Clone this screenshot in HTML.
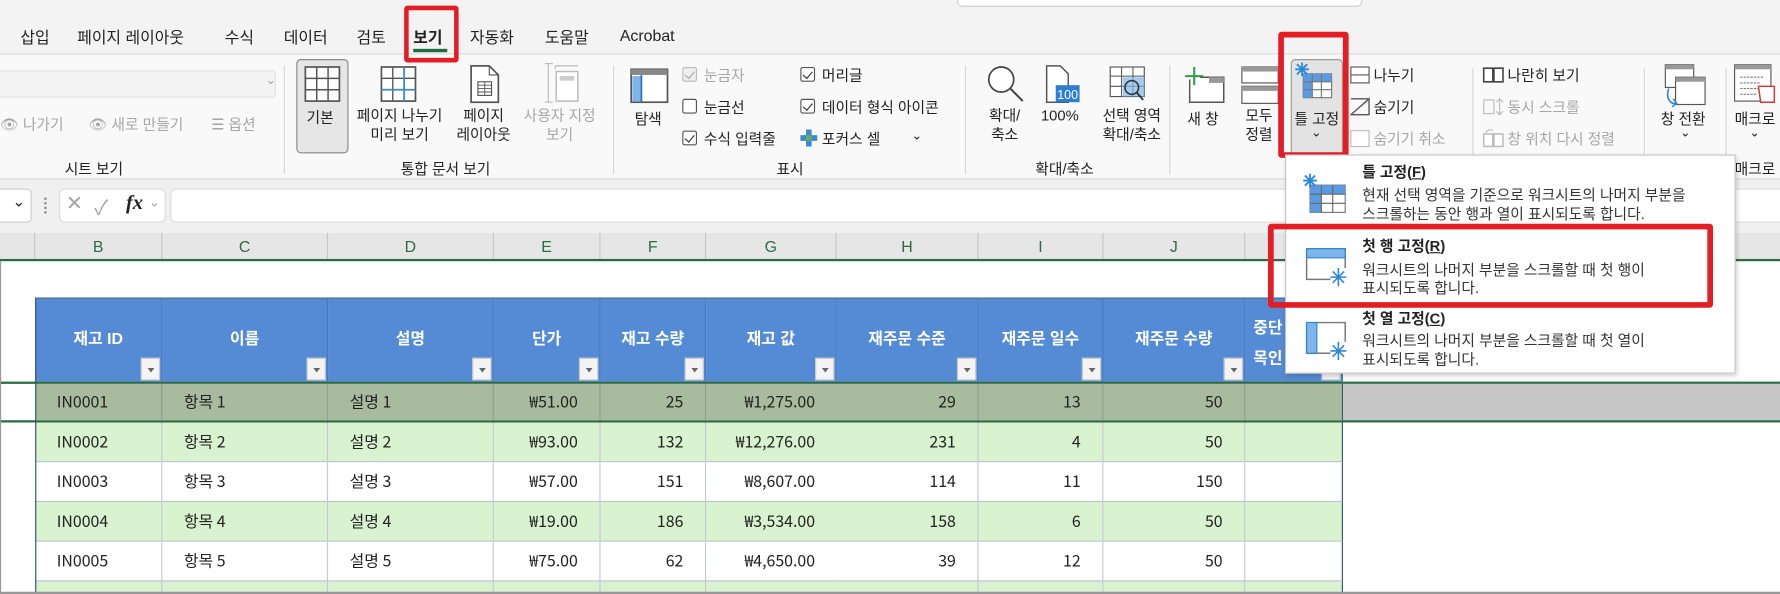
<!DOCTYPE html>
<html><head><meta charset="utf-8">
<style>
*{margin:0;padding:0;box-sizing:border-box}
html,body{width:1780px;height:594px;overflow:hidden;background:#fff}
#w{position:absolute;left:0;top:0;width:1568px;height:523px;transform-origin:0 0;transform:scale(1.13520,1.13576);font-family:"Liberation Sans","Noto Sans CJK KR",sans-serif;color:#222;overflow:hidden}
.a{position:absolute;white-space:nowrap}
.t{font-size:14px;top:23px}
.r{font-size:13px}
.g{color:#a6a6a6}
.c{text-align:center}
.lbl{font-size:13px;top:138px}
.sep{position:absolute;top:58px;width:1px;height:95px;background:#d6d6d6}
.cb{position:absolute;width:13px;height:13px;border:1px solid #555;border-radius:2px;background:#fff}
.cb.k::after{content:"";position:absolute;left:3px;top:1px;width:4px;height:7px;border:solid #333;border-width:0 1.3px 1.3px 0;transform:rotate(40deg)}
.cb.d{border-color:#bbb;background:#eee}.cb.d::after{border-color:#aaa}
.hd{position:absolute;top:205px;height:24px;font-size:14px;color:#2e6b45;text-align:center;line-height:24px;border-right:1px solid #c6c6c6}
.th{position:absolute;top:263px;height:73px;background:#558bd5;color:#fff;font-weight:bold;font-size:14px;text-align:center;line-height:70px;border-right:1px solid #4a78b8}
.fb{position:absolute;right:1px;bottom:1px;width:17px;height:20px;background:#f4f4f4;border:1px solid #c8c8c8}
.fb::after{content:"";position:absolute;left:5px;top:8px;border:3px solid transparent;border-top:4px solid #666}
.row{position:absolute;left:31px;width:1151px;height:35px;font-size:14px;font-family:"Noto Sans CJK KR","Liberation Sans",sans-serif}
.cell{position:absolute;top:0;height:100%;line-height:35px;border-right:1px solid #c3cad3;border-bottom:1px solid #b9c3cf}
.r1 .cell{border-bottom:none}
.L{padding-left:19px}.R{text-align:right;padding-right:19px}
.mt{font-size:13px;font-weight:bold;left:1200px}
.md{font-size:13px;left:1200px;color:#333}
</style></head><body><div id="w">
<div class="a" style="left:0;top:0;width:1568px;height:48px;background:#f3f3f3;border-bottom:1px solid #dadada"></div>
<div class="a" style="left:843px;top:-10px;width:357px;height:16px;background:#fff;border:1px solid #d0d0d0;border-radius:5px"></div>
<div class="a" style="left:0;top:48px;width:1568px;height:110px;background:#f9f9f9;border-bottom:1px solid #d6d6d6"></div>
<div class="a" style="left:0;top:158px;width:1568px;height:47px;background:#f0f0f0"></div>
<div class="a t" style="left:18px">삽입</div>
<div class="a t" style="left:68px">페이지 레이아웃</div>
<div class="a t" style="left:198px">수식</div>
<div class="a t" style="left:250px">데이터</div>
<div class="a t" style="left:314px">검토</div>
<div class="a t" style="left:364px;font-weight:bold">보기</div>
<div class="a" style="left:364px;top:43px;width:30px;height:3px;background:#1e6b3c"></div>
<div class="a" style="left:356px;top:5px;width:48px;height:50px;border:4px solid #e41d25;border-radius:3px"></div>
<div class="a t" style="left:414px">자동화</div>
<div class="a t" style="left:480px">도움말</div>
<div class="a t" style="left:546px">Acrobat</div>
<div class="a" style="left:-5px;top:62px;width:248px;height:24px;border:1px solid #e2e2e2;background:#f4f4f4;border-radius:3px"></div>
<div class="a g" style="left:234px;top:64px;font-size:11px">⌄</div>
<div class="a r g" style="left:0;top:99px">👁 나가기</div>
<div class="a r g" style="left:78px;top:99px">👁 새로 만들기</div>
<div class="a r g" style="left:186px;top:99px">☰ 옵션</div>
<div class="a lbl" style="left:57px">시트 보기</div>
<div class="sep" style="left:250px"></div>
<div class="a" style="left:261px;top:52px;width:46px;height:83px;background:#e6e6e6;border:1px solid #888;border-radius:4px"></div>
<svg class="a" style="left:268px;top:58px" width="32" height="32"><rect x="1" y="1" width="30" height="30" fill="#fff" stroke="#555" stroke-width="1.5"/><path d="M11 1V31M21 1V31M1 11H31M1 21H31" stroke="#555" stroke-width="1.3"/></svg>
<div class="a r" style="left:270px;top:93px">기본</div>
<svg class="a" style="left:335px;top:58px" width="32" height="32"><rect x="1" y="1" width="30" height="30" fill="#fff" stroke="#555" stroke-width="1.5"/><path d="M11 1V31M1 11H31" stroke="#555" stroke-width="1.2"/><path d="M21 1V31M1 21H31" stroke="#3a8ad6" stroke-width="1.6"/></svg>
<div class="a r c" style="left:310px;top:93px;width:84px;line-height:17px">페이지 나누기<br>미리 보기</div>
<svg class="a" style="left:413px;top:57px" width="28" height="34"><path d="M2 1H18L26 9V33H2Z" fill="#fff" stroke="#555" stroke-width="1.5"/><path d="M18 1V9H26" fill="none" stroke="#555"/><rect x="8" y="15" width="12" height="12" fill="none" stroke="#555"/><path d="M14 15V27M8 21H20M8 18H20M8 24H20" stroke="#555" stroke-width=".8"/></svg>
<div class="a r c" style="left:400px;top:93px;width:52px;line-height:17px">페이지<br>레이아웃</div>
<svg class="a g" style="left:479px;top:55px" width="32" height="36"><path d="M4 1V35M1 1H8M1 35H8M10 3H30M10 3V6" stroke="#bbb" fill="none"/><rect x="11" y="8" width="19" height="26" fill="#fff" stroke="#bbb" stroke-width="1.3"/><rect x="14" y="12" width="13" height="4" fill="#ccc"/></svg>
<div class="a r c g" style="left:455px;top:93px;width:76px;line-height:17px">사용자 지정<br>보기</div>
<div class="a lbl" style="left:353px">통합 문서 보기</div>
<div class="sep" style="left:540px"></div>
<svg class="a" style="left:555px;top:60px" width="34" height="31"><rect x="1" y="1" width="32" height="29" fill="#fff" stroke="#555" stroke-width="1.5"/><rect x="1" y="1" width="32" height="5" fill="#888"/><rect x="2" y="7" width="8" height="22" fill="#7fb6ea"/><path d="M10 6V30" stroke="#2a6fb8" stroke-width="1.5"/></svg>
<div class="a r" style="left:559px;top:94px">탐색</div>
<div class="cb k d" style="left:601px;top:59px"></div><div class="a r g" style="left:620px;top:56px">눈금자</div>
<div class="cb" style="left:601px;top:87px"></div><div class="a r" style="left:620px;top:84px">눈금선</div>
<div class="cb k" style="left:601px;top:115px"></div><div class="a r" style="left:620px;top:112px">수식 입력줄</div>
<div class="cb k" style="left:705px;top:59px"></div><div class="a r" style="left:724px;top:56px">머리글</div>
<div class="cb k" style="left:705px;top:87px"></div><div class="a r" style="left:724px;top:84px">데이터 형식 아이콘</div>
<svg class="a" style="left:705px;top:114px" width="15" height="15"><path d="M5 0H10V5H15V10H10V15H5V10H0V5H5Z" fill="#3a8ad6"/><rect x="5" y="5" width="5" height="5" fill="#5fae6a"/></svg>
<div class="a r" style="left:724px;top:112px">포커스 셀</div>
<div class="a" style="left:803px;top:113px;font-size:11px">⌄</div>
<div class="a lbl" style="left:684px">표시</div>
<div class="sep" style="left:850px"></div>
<svg class="a" style="left:869px;top:57px" width="34" height="34"><circle cx="13" cy="13" r="11" fill="#fff" stroke="#444" stroke-width="1.5"/><path d="M21 21L32 32" stroke="#444" stroke-width="1.8"/></svg>
<div class="a r c" style="left:862px;top:93px;width:46px;line-height:17px">확대/<br>축소</div>
<svg class="a" style="left:920px;top:57px" width="32" height="34"><path d="M2 1H14L21 8V33H2Z" fill="#fff" stroke="#555" stroke-width="1.3"/><rect x="10" y="18" width="21" height="15" fill="#2f7fd0"/><text x="20.5" y="30" font-size="11" fill="#fff" text-anchor="middle" font-family="Liberation Sans">100</text></svg>
<div class="a r" style="left:917px;top:94px">100%</div>
<svg class="a" style="left:977px;top:58px" width="36" height="34"><rect x="1" y="1" width="30" height="26" fill="#fff" stroke="#555"/><path d="M11 1V27M21 1V27M1 9H31M1 18H31" stroke="#555" stroke-width=".9"/><rect x="12" y="10" width="19" height="17" fill="#7fb6ea" opacity=".7"/><circle cx="20" cy="19" r="6" fill="none" stroke="#333" stroke-width="1.4"/><path d="M24 23L30 30" stroke="#333" stroke-width="1.6"/></svg>
<div class="a r c" style="left:957px;top:93px;width:80px;line-height:17px">선택 영역<br>확대/축소</div>
<div class="a lbl" style="left:912px">확대/축소</div>
<div class="sep" style="left:1030px"></div>
<svg class="a" style="left:1043px;top:58px" width="36" height="34"><path d="M5 12V32H35V10H14" fill="#fff" stroke="#555" stroke-width="1.3"/><rect x="22" y="10" width="13" height="5" fill="#999"/><path d="M9 1V17M1 9H17" stroke="#2f9a48" stroke-width="1.8"/></svg>
<div class="a r" style="left:1046px;top:94px">새 창</div>
<svg class="a" style="left:1093px;top:58px" width="34" height="34"><rect x="1" y="1" width="32" height="14" fill="#fff" stroke="#555"/><rect x="1" y="1" width="32" height="4" fill="#999"/><rect x="1" y="18" width="32" height="15" fill="#fff" stroke="#555"/><rect x="1" y="18" width="32" height="4" fill="#999"/></svg>
<div class="a r" style="left:1097px;top:93px;line-height:17px">모두<br>정렬</div>
<div class="a" style="left:1137px;top:52px;width:46px;height:100px;background:#e3e3e3;border:1px solid #999;border-radius:4px"></div>
<svg class="a" style="left:1140px;top:54px" width="36" height="36"><rect x="8" y="11" width="25" height="21" fill="#fff" stroke="#777"/><path d="M8 11H33V18H16V32H8Z" fill="#5a9ae0"/><path d="M16 11V32M24 11V32M8 18H33M8 25H33" stroke="#777" stroke-width="1"/><path d="M7 1V13M1 7H13M2.5 2.5L11.5 11.5M11.5 2.5L2.5 11.5" stroke="#2b86d9" stroke-width="1.6"/></svg>
<div class="a r" style="left:1137px;top:94px;width:46px;text-align:center">틀 고정</div>
<div class="a" style="left:1155px;top:110px;font-size:11px">⌄</div>
<div class="a" style="left:1126px;top:28px;width:62px;height:111px;border:5px solid #e41d25;border-radius:3px"></div>
<svg class="a" style="left:1189px;top:58px" width="20" height="80"><rect x="1" y="1" width="16" height="14" fill="#fff" stroke="#555"/><path d="M1 8H17" stroke="#555"/><path d="M1 43L17 29V43Z M1 29H17" fill="none" stroke="#555" stroke-width="1.2"/><rect x="1" y="57" width="16" height="14" fill="#fff" stroke="#bbb"/></svg>
<div class="a r" style="left:1210px;top:56px">나누기</div>
<div class="a r" style="left:1210px;top:84px">숨기기</div>
<div class="a r g" style="left:1210px;top:112px">숨기기 취소</div>
<div class="sep" style="left:1297px;top:60px;height:80px"></div>
<svg class="a" style="left:1306px;top:58px" width="20" height="16"><path d="M1 2H9V14H1Z M10 2H18V14H10Z" fill="#fff" stroke="#444" stroke-width="1.4"/></svg>
<div class="a r" style="left:1328px;top:56px">나란히 보기</div>
<svg class="a" style="left:1306px;top:86px" width="20" height="16"><rect x="1" y="2" width="9" height="12" fill="none" stroke="#bbb"/><path d="M15 1V15M12 4L15 1L18 4M12 12L15 15L18 12" stroke="#bbb" fill="none"/></svg>
<div class="a r g" style="left:1328px;top:84px">동시 스크롤</div>
<svg class="a" style="left:1306px;top:113px" width="20" height="17"><path d="M1 5H9V16H1Z M10 5H18V16H10Z" fill="#fff" stroke="#bbb" stroke-width="1.3"/><path d="M3 4A4 4 0 0 1 9 2" stroke="#bbb" fill="none"/></svg>
<div class="a r g" style="left:1328px;top:112px">창 위치 다시 정렬</div>
<div class="sep" style="left:1448px;top:60px;height:80px"></div>
<svg class="a" style="left:1464px;top:56px" width="40" height="40"><rect x="3" y="1" width="25" height="20" fill="#fff" stroke="#555"/><rect x="3" y="1" width="25" height="4" fill="#999"/><rect x="12" y="12" width="26" height="24" fill="#fff" stroke="#555"/><rect x="12" y="12" width="26" height="4" fill="#999"/><path d="M6 22C3 30 7 36 13 35M10 31L13 35L9 38" stroke="#2b86d9" stroke-width="1.4" fill="none"/></svg>
<div class="a r" style="left:1463px;top:94px">창 전환</div>
<div class="a" style="left:1480px;top:110px;font-size:11px">⌄</div>
<div class="sep" style="left:1520px;top:60px;height:80px"></div>
<svg class="a" style="left:1527px;top:56px" width="41" height="38"><rect x="1" y="1" width="32" height="32" fill="#fff" stroke="#555"/><rect x="1" y="1" width="32" height="4" fill="#999"/><path d="M6 12H26M6 17H24M6 22H22M6 27H20" stroke="#777" stroke-dasharray="2 1"/><path d="M22 20H36V34H24Z" fill="#fff" stroke="#d33" stroke-width="1.3"/></svg>
<div class="a r" style="left:1528px;top:94px">매크로</div>
<div class="a" style="left:1541px;top:110px;font-size:11px">⌄</div>
<div class="a lbl" style="left:1528px">매크로</div>
<div class="a" style="left:-6px;top:166px;width:34px;height:30px;background:#fff;border:1px solid #ccc;border-radius:4px"></div>
<div class="a" style="left:11px;top:170px;font-size:13px">⌄</div>
<div class="a" style="left:39px;top:174px;width:2px;height:14px;border-left:2px dotted #888"></div>
<div class="a" style="left:52px;top:166px;width:94px;height:30px;background:#fff;border:1px solid #ddd;border-radius:5px"></div>
<div class="a g" style="left:58px;top:169px;font-size:18px">✕</div>
<div class="a g" style="left:83px;top:169px;font-size:18px">✓</div>
<div class="a" style="left:111px;top:168px;font-size:18px;font-style:italic;font-family:'Liberation Serif',serif;font-weight:bold">fx</div>
<div class="a g" style="left:131px;top:171px;font-size:12px">⌄</div>
<div class="a" style="left:150px;top:166px;width:1430px;height:30px;background:#fff;border:1px solid #ddd;border-radius:5px"></div>
<div class="a" style="left:0;top:205px;width:1568px;height:24px;background:#e6e6e6"></div>
<div class="hd" style="left:0;width:31px"></div>
<div class="hd" style="left:31px;width:112px">B</div>
<div class="hd" style="left:143px;width:146px">C</div>
<div class="hd" style="left:289px;width:146px">D</div>
<div class="hd" style="left:435px;width:94px">E</div>
<div class="hd" style="left:529px;width:93px">F</div>
<div class="hd" style="left:622px;width:115px">G</div>
<div class="hd" style="left:737px;width:125px">H</div>
<div class="hd" style="left:862px;width:110px">I</div>
<div class="hd" style="left:972px;width:125px">J</div>
<div class="hd" style="left:1097px;width:110px"></div>
<div class="hd" style="left:1490px;width:40px;border:none">Q</div>
<div class="a" style="left:0;top:228px;width:1568px;height:2px;background:#2c6b45"></div>
<div class="a" style="left:31px;top:262px;width:1152px;height:1px;background:#2f4f6f"></div>
<div class="th" style="left:31px;width:112px">재고 ID<div class="fb"></div></div>
<div class="th" style="left:143px;width:146px">이름<div class="fb"></div></div>
<div class="th" style="left:289px;width:146px">설명<div class="fb"></div></div>
<div class="th" style="left:435px;width:94px">단가<div class="fb"></div></div>
<div class="th" style="left:529px;width:93px">재고 수량<div class="fb"></div></div>
<div class="th" style="left:622px;width:115px">재고 값<div class="fb"></div></div>
<div class="th" style="left:737px;width:125px">재주문 수준<div class="fb"></div></div>
<div class="th" style="left:862px;width:110px">재주문 일수<div class="fb"></div></div>
<div class="th" style="left:972px;width:125px">재주문 수량<div class="fb"></div></div>
<div class="th" style="left:1097px;width:86px;line-height:27px;text-align:left;padding:12px 0 0 7px">중단<br>목인<div class="fb"></div></div>
<div class="a" style="left:0;top:336px;width:1568px;height:2px;background:#2c6b45"></div>
<div class="a" style="left:1182px;top:338px;width:386px;height:33px;background:#c6c6c6"></div>
<div class="a" style="left:0;top:370px;width:1568px;height:2px;background:#2c6b45"></div>

<div class="row r1" style="top:338px;height:32px;background:#a9bb9f">
<div class="cell L" style="left:0;width:112px;line-height:32px;border-color:#8f9f88">IN0001</div><div class="cell L" style="left:112px;width:146px;line-height:32px;border-color:#8f9f88">항목 1</div><div class="cell L" style="left:258px;width:146px;line-height:32px;border-color:#8f9f88">설명 1</div><div class="cell R" style="left:404px;width:94px;line-height:32px;border-color:#8f9f88">₩51.00</div><div class="cell R" style="left:498px;width:93px;line-height:32px;border-color:#8f9f88">25</div><div class="cell R" style="left:591px;width:115px;line-height:32px;border-right:none">₩1,275.00</div><div class="cell R" style="left:706px;width:125px;line-height:32px;border-color:#8f9f88">29</div><div class="cell R" style="left:831px;width:110px;line-height:32px;border-color:#8f9f88">13</div><div class="cell R" style="left:941px;width:125px;line-height:32px;border-color:#8f9f88">50</div><div class="cell" style="left:1066px;width:86px;border-color:#2f4f6f"></div></div>

<div class="row" style="top:372px;background:#d9f2d0"><div class="cell L" style="left:0;width:112px">IN0002</div><div class="cell L" style="left:112px;width:146px">항목 2</div><div class="cell L" style="left:258px;width:146px">설명 2</div><div class="cell R" style="left:404px;width:94px">₩93.00</div><div class="cell R" style="left:498px;width:93px">132</div><div class="cell R" style="left:591px;width:115px;border-right:none">₩12,276.00</div><div class="cell R" style="left:706px;width:125px">231</div><div class="cell R" style="left:831px;width:110px">4</div><div class="cell R" style="left:941px;width:125px">50</div><div class="cell" style="left:1066px;width:86px;border-right-color:#2f4f6f"></div></div>
<div class="row" style="top:407px;background:#fff"><div class="cell L" style="left:0;width:112px">IN0003</div><div class="cell L" style="left:112px;width:146px">항목 3</div><div class="cell L" style="left:258px;width:146px">설명 3</div><div class="cell R" style="left:404px;width:94px">₩57.00</div><div class="cell R" style="left:498px;width:93px">151</div><div class="cell R" style="left:591px;width:115px;border-right:none">₩8,607.00</div><div class="cell R" style="left:706px;width:125px">114</div><div class="cell R" style="left:831px;width:110px">11</div><div class="cell R" style="left:941px;width:125px">150</div><div class="cell" style="left:1066px;width:86px;border-right-color:#2f4f6f"></div></div>
<div class="row" style="top:442px;background:#d9f2d0"><div class="cell L" style="left:0;width:112px">IN0004</div><div class="cell L" style="left:112px;width:146px">항목 4</div><div class="cell L" style="left:258px;width:146px">설명 4</div><div class="cell R" style="left:404px;width:94px">₩19.00</div><div class="cell R" style="left:498px;width:93px">186</div><div class="cell R" style="left:591px;width:115px;border-right:none">₩3,534.00</div><div class="cell R" style="left:706px;width:125px">158</div><div class="cell R" style="left:831px;width:110px">6</div><div class="cell R" style="left:941px;width:125px">50</div><div class="cell" style="left:1066px;width:86px;border-right-color:#2f4f6f"></div></div>
<div class="row" style="top:477px;background:#fff"><div class="cell L" style="left:0;width:112px">IN0005</div><div class="cell L" style="left:112px;width:146px">항목 5</div><div class="cell L" style="left:258px;width:146px">설명 5</div><div class="cell R" style="left:404px;width:94px">₩75.00</div><div class="cell R" style="left:498px;width:93px">62</div><div class="cell R" style="left:591px;width:115px;border-right:none">₩4,650.00</div><div class="cell R" style="left:706px;width:125px">39</div><div class="cell R" style="left:831px;width:110px">12</div><div class="cell R" style="left:941px;width:125px">50</div><div class="cell" style="left:1066px;width:86px;border-right-color:#2f4f6f"></div></div>
<div class="row" style="top:512px;background:#d9f2d0"><div class="cell" style="left:0;width:112px"></div><div class="cell" style="left:112px;width:146px"></div><div class="cell" style="left:258px;width:146px"></div><div class="cell" style="left:404px;width:94px"></div><div class="cell" style="left:498px;width:93px"></div><div class="cell" style="left:591px;width:240px"></div><div class="cell" style="left:831px;width:110px"></div><div class="cell" style="left:941px;width:125px"></div><div class="cell" style="left:1066px;width:86px;border-right-color:#2f4f6f"></div></div>
<div class="a" style="left:31px;top:262px;width:1px;height:261px;background:#2f4f6f"></div>
<div class="a" style="left:0;top:230px;width:1px;height:293px;background:#999"></div>
<div class="a" style="left:0;top:521px;width:1568px;height:2px;background:#999"></div>
<div class="a" style="left:1132px;top:136px;width:397px;height:193px;background:#fff;border:1px solid #c4c4c4;box-shadow:1px 2px 4px rgba(0,0,0,.18)"></div>
<svg class="a" style="left:1147px;top:152px" width="40" height="36"><rect x="7" y="11" width="31" height="24" fill="#fff" stroke="#777"/><path d="M7 11H38V19H17V35H7Z" fill="#5a9ae0"/><path d="M17 11V35M27 11V35M7 19H38M7 27H38" stroke="#666"/><path d="M7 1V13M1 7H13M2.5 2.5L11.5 11.5M11.5 2.5L2.5 11.5" stroke="#2b86d9" stroke-width="1.6"/></svg>
<div class="a mt" style="top:141px">틀 고정(<u>F</u>)</div>
<div class="a md" style="top:161px">현재 선택 영역을 기준으로 워크시트의 나머지 부분을</div>
<div class="a md" style="top:178px">스크롤하는 동안 행과 열이 표시되도록 합니다.</div>
<svg class="a" style="left:1150px;top:218px" width="40" height="36"><path d="M1 1H35V18M1 1V28H22" fill="#fff" stroke="#777" stroke-width="1.3"/><rect x="1" y="1" width="34" height="8" fill="#7fb6ea" stroke="#2b86d9"/><path d="M29 18V34M22 26H36M24 21L34 31M34 21L24 31" stroke="#2b86d9" stroke-width="1.4"/></svg>
<div class="a mt" style="top:206px">첫 행 고정(<u>R</u>)</div>
<div class="a md" style="top:227px">워크시트의 나머지 부분을 스크롤할 때 첫 행이</div>
<div class="a md" style="top:243px">표시되도록 합니다.</div>
<div class="a" style="left:1117px;top:197px;width:392px;height:74px;border:5px solid #e41d25;border-radius:3px"></div>
<svg class="a" style="left:1150px;top:283px" width="40" height="36"><path d="M1 1H35V18M1 1V28H22" fill="#fff" stroke="#777" stroke-width="1.3"/><rect x="1" y="1" width="9" height="27" fill="#7fb6ea" stroke="#2b86d9"/><path d="M29 18V34M22 26H36M24 21L34 31M34 21L24 31" stroke="#2b86d9" stroke-width="1.4"/></svg>
<div class="a mt" style="top:270px">첫 열 고정(<u>C</u>)</div>
<div class="a md" style="top:289px">워크시트의 나머지 부분을 스크롤할 때 첫 열이</div>
<div class="a md" style="top:306px">표시되도록 합니다.</div>
</div></body></html>
